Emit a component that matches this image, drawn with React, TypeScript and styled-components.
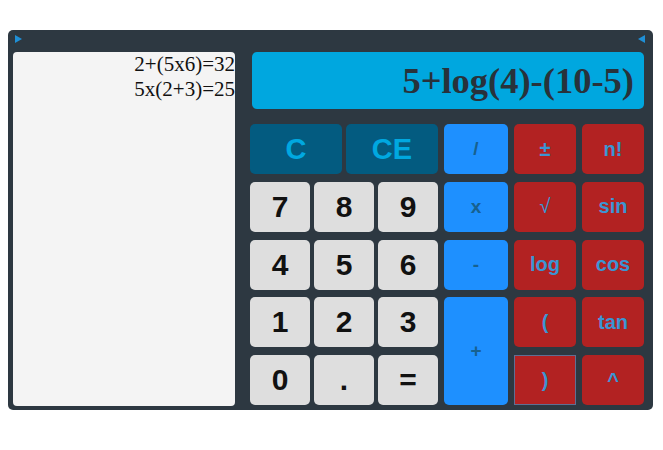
import React from "react";
import styled, { createGlobalStyle } from "styled-components";

const Global = createGlobalStyle`
  html, body { margin: 0; padding: 0; background: #ffffff; }
  body { font-family: "Liberation Sans", Arial, sans-serif; }
`;

const Frame = styled.div`
  margin: 30px 0 0 8px;
  width: 645px;
  height: 380px;
  background: #2d3841;
  border-radius: 5px;
  display: flex;
  flex-direction: column;
  box-sizing: border-box;
`;

const TopBar = styled.div`
  height: 22px;
  display: flex;
  justify-content: space-between;
  align-items: flex-start;
  padding: 5px 8px 0 7px;
  box-sizing: border-box;
`;

const Arrow = styled.span<{ $dir: "left" | "right" }>`
  width: 0;
  height: 0;
  border-top: 4px solid transparent;
  border-bottom: 4px solid transparent;
  ${(p) =>
    p.$dir === "right"
      ? "border-left: 7px solid #1f8fd6;"
      : "border-right: 7px solid #1f8fd6;"}
`;

const Body = styled.div`
  flex: 1;
  display: flex;
  gap: 15px;
  padding: 0 9px 4px 5px;
`;

const History = styled.div`
  width: 222px;
  background: #f4f4f4;
  border-radius: 4px;
  font-family: "Liberation Serif", "Times New Roman", serif;
  font-size: 21px;
  line-height: 25px;
  color: #111;
  text-align: right;
`;

const Main = styled.div`
  width: 394px;
  display: flex;
  flex-direction: column;
  gap: 15px;
`;

const Display = styled.div`
  margin-left: 2px;
  height: 57px;
  background: #00a7df;
  border-radius: 5px;
  display: flex;
  align-items: center;
  justify-content: flex-end;
  padding-right: 10px;
  font-family: "Liberation Serif", "Times New Roman", serif;
  font-weight: bold;
  font-size: 36.5px;
  color: #28323b;
`;

const Keypad = styled.div`
  display: flex;
  gap: 6px;
`;

const NumPad = styled.div`
  width: 188px;
  display: flex;
  flex-direction: column;
  gap: 7.75px;
`;

const ClearRow = styled.div`
  display: grid;
  grid-template-columns: 1fr 1fr;
  grid-template-rows: 50px;
  column-gap: 4px;
`;

const Digits = styled.div`
  display: grid;
  grid-template-columns: repeat(3, 60px);
  grid-template-rows: repeat(4, 50px);
  column-gap: 4px;
  row-gap: 7.75px;
`;

const OpPad = styled.div`
  display: grid;
  grid-template-columns: 64px 62px 62px;
  grid-template-rows: repeat(5, 50px);
  column-gap: 6px;
  row-gap: 7.75px;
`;

type Kind = "num" | "clear" | "op" | "fn";

const Key = styled.button<{ $kind: Kind; $rowSpan?: number; $outlined?: boolean; $thin?: boolean }>`
  border: ${(p) => (p.$outlined ? "1px solid #5f6f93" : "none")};
  border-radius: ${(p) => (p.$outlined ? "0" : "5px")};
  padding: 0;
  margin: 0;
  font-family: "Liberation Sans", Arial, sans-serif;
  font-weight: ${(p) => (p.$thin ? "normal" : "bold")};
  display: flex;
  align-items: center;
  justify-content: center;
  grid-row: span ${(p) => p.$rowSpan ?? 1};
  ${(p) =>
    p.$kind === "num"
      ? "background: #dedede; color: #111; font-size: 30px;"
      : p.$kind === "clear"
      ? "background: #035b80; color: #00a8e0; font-size: 29px;"
      : p.$kind === "op"
      ? "background: #1e90ff; color: #17618f; font-size: 19px;"
      : "background: #b22222; color: #3b95d3; font-size: 20px;"}
`;

const nums = ["7", "8", "9", "4", "5", "6", "1", "2", "3", "0", ".", "="];

export default function App() {
  return (
    <>
      <Global />
      <Frame>
        <TopBar>
          <Arrow $dir="right" />
          <Arrow $dir="left" />
        </TopBar>
        <Body>
          <History>
            <div>2+(5x6)=32</div>
            <div>5x(2+3)=25</div>
          </History>
          <Main>
            <Display>5+log(4)-(10-5)</Display>
            <Keypad>
              <NumPad>
                <ClearRow>
                  <Key $kind="clear">C</Key>
                  <Key $kind="clear">CE</Key>
                </ClearRow>
                <Digits>
                  {nums.map((n) => (
                    <Key key={n} $kind="num">
                      {n}
                    </Key>
                  ))}
                </Digits>
              </NumPad>
              <OpPad>
                <Key $kind="op">/</Key>
                <Key $kind="fn">±</Key>
                <Key $kind="fn">n!</Key>
                <Key $kind="op">x</Key>
                <Key $kind="fn" $thin>√</Key>
                <Key $kind="fn">sin</Key>
                <Key $kind="op">-</Key>
                <Key $kind="fn">log</Key>
                <Key $kind="fn">cos</Key>
                <Key $kind="op" $rowSpan={2}>+</Key>
                <Key $kind="fn">(</Key>
                <Key $kind="fn">tan</Key>
                <Key $kind="fn" $outlined>)</Key>
                <Key $kind="fn">^</Key>
              </OpPad>
            </Keypad>
          </Main>
        </Body>
      </Frame>
    </>
  );
}
